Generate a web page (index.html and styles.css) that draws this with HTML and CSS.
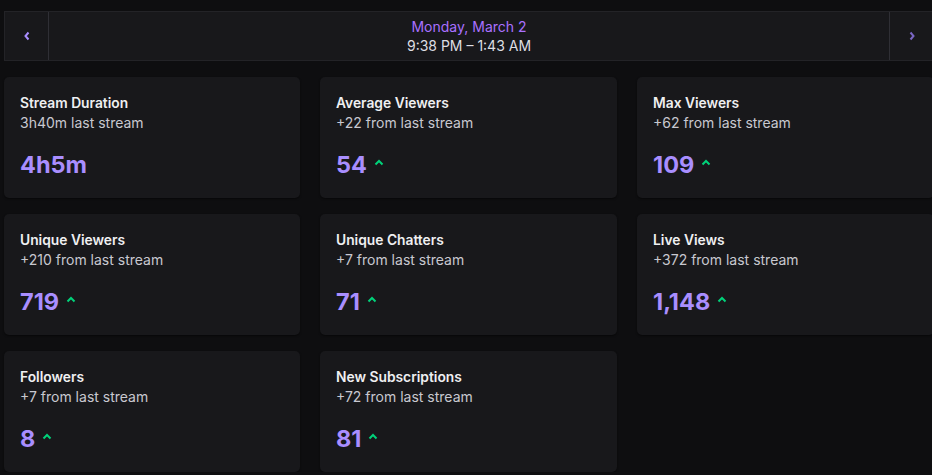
FILE: index.html
```html
<!DOCTYPE html>
<html>
<head>
<meta charset="utf-8">
<link rel="stylesheet" href="styles.css">
</head>
<body>
<div class="page">
  <div class="header">
    <button class="nav nav-left" aria-label="Previous">
      <svg width="8" height="10" viewBox="0 0 8 10"><polyline points="5.5,1.5 2.5,5 5.5,8.5" fill="none" stroke="#a98eff" stroke-width="2"/></svg>
    </button>
    <div class="when">
      <div class="date">Monday, March 2</div>
      <div class="time">9:38 PM – 1:43 AM</div>
    </div>
    <button class="nav nav-right" aria-label="Next">
      <svg width="8" height="10" viewBox="0 0 8 10"><polyline points="2.5,1.5 5.5,5 2.5,8.5" fill="none" stroke="#7a66c4" stroke-width="2"/></svg>
    </button>
  </div>

  <div class="grid">
    <div class="card">
      <div class="title">Stream Duration</div>
      <div class="sub">3h40m last stream</div>
      <div class="value"><span class="num">4h5m</span></div>
    </div>
    <div class="card">
      <div class="title">Average Viewers</div>
      <div class="sub">+22 from last stream</div>
      <div class="value"><span class="num">54</span><svg class="up" width="10" height="7" viewBox="0 0 10 7"><polyline points="1.5,5.5 5,2 8.5,5.5" fill="none" stroke="#00d27a" stroke-width="2"/></svg></div>
    </div>
    <div class="card">
      <div class="title">Max Viewers</div>
      <div class="sub">+62 from last stream</div>
      <div class="value"><span class="num">109</span><svg class="up" width="10" height="7" viewBox="0 0 10 7"><polyline points="1.5,5.5 5,2 8.5,5.5" fill="none" stroke="#00d27a" stroke-width="2"/></svg></div>
    </div>
    <div class="card">
      <div class="title">Unique Viewers</div>
      <div class="sub">+210 from last stream</div>
      <div class="value"><span class="num">719</span><svg class="up" width="10" height="7" viewBox="0 0 10 7"><polyline points="1.5,5.5 5,2 8.5,5.5" fill="none" stroke="#00d27a" stroke-width="2"/></svg></div>
    </div>
    <div class="card">
      <div class="title">Unique Chatters</div>
      <div class="sub">+7 from last stream</div>
      <div class="value"><span class="num">71</span><svg class="up" width="10" height="7" viewBox="0 0 10 7"><polyline points="1.5,5.5 5,2 8.5,5.5" fill="none" stroke="#00d27a" stroke-width="2"/></svg></div>
    </div>
    <div class="card">
      <div class="title">Live Views</div>
      <div class="sub">+372 from last stream</div>
      <div class="value"><span class="num">1,148</span><svg class="up" width="10" height="7" viewBox="0 0 10 7"><polyline points="1.5,5.5 5,2 8.5,5.5" fill="none" stroke="#00d27a" stroke-width="2"/></svg></div>
    </div>
    <div class="card">
      <div class="title">Followers</div>
      <div class="sub">+7 from last stream</div>
      <div class="value"><span class="num">8</span><svg class="up" width="10" height="7" viewBox="0 0 10 7"><polyline points="1.5,5.5 5,2 8.5,5.5" fill="none" stroke="#00d27a" stroke-width="2"/></svg></div>
    </div>
    <div class="card">
      <div class="title">New Subscriptions</div>
      <div class="sub">+72 from last stream</div>
      <div class="value"><span class="num">81</span><svg class="up" width="10" height="7" viewBox="0 0 10 7"><polyline points="1.5,5.5 5,2 8.5,5.5" fill="none" stroke="#00d27a" stroke-width="2"/></svg></div>
    </div>
  </div>
</div>
</body>
</html>
```

FILE: styles.css
```css
* { box-sizing: border-box; }
html, body {
  margin: 0;
  padding: 0;
  background: #0e0e10;
  overflow: hidden;
}
body {
  font-family: Inter, "Noto Sans", "Liberation Sans", sans-serif;
  color: #efeff1;
}
.page {
  width: 931px;
  margin-left: 4px;
  padding-top: 11px;
}
.header {
  display: flex;
  width: 930px;
  height: 50px;
  background: #18181b;
  border: 1px solid #232327;
}
.nav {
  width: 44px;
  flex: none;
  background: transparent;
  border: none;
  padding: 0;
  display: flex;
  align-items: center;
  justify-content: center;
}
.nav-left { border-right: 1px solid #2f2f35; }
.nav-right { border-left: 1px solid #2f2f35; }
.when {
  flex: 1;
  display: flex;
  flex-direction: column;
  align-items: center;
  justify-content: center;
  font-size: 14px;
  line-height: 19px;
  padding-bottom: 1px;
}
.date { color: #a970ff; }
.time { color: #dedee3; }
.grid {
  display: grid;
  grid-template-columns: 296px 297px 297px;
  grid-auto-rows: 121px;
  column-gap: 20px;
  row-gap: 16px;
  margin-top: 16px;
}
.card {
  background: #18181b;
  border-radius: 5px;
  padding: 16px 16px;
  box-shadow: 0 1px 2px rgba(0,0,0,0.5);
}
.title {
  font-size: 13.8px;
  font-weight: 600;
  line-height: 20px;
  color: #efeff1;
}
.sub {
  font-size: 14px;
  line-height: 20px;
  color: #c8c8d0;
}
.value {
  margin-top: 17px;
  display: flex;
  align-items: center;
  gap: 7px;
}
.num {
  font-size: 23.5px;
  font-weight: 700;
  line-height: 30px;
  color: #a98eff;
}
.up { margin-top: -5px; }
```
